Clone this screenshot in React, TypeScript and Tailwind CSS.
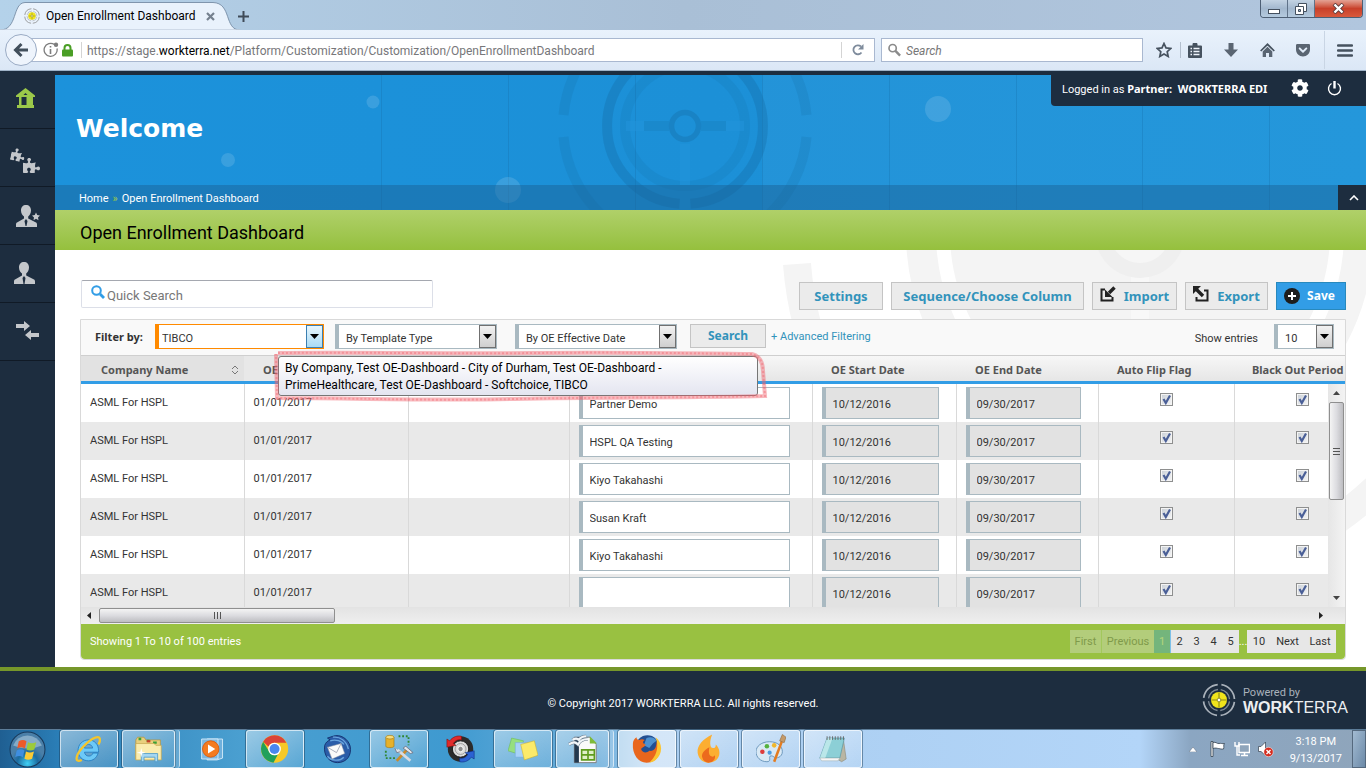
import React from 'react';
import { FaPuzzlePiece, FaCog, FaGetPocket } from 'react-icons/fa';

interface EnrollmentRow {
  id: number;
  company: string;
  effective: string;
  owner: string;
  start: string;
  end: string;
}

const ROWS: EnrollmentRow[] = [
  'Partner Demo',
  'HSPL QA Testing',
  'Kiyo Takahashi',
  'Susan Kraft',
  'Kiyo Takahashi',
  '',
].map((owner, i) => ({
  id: i + 1,
  company: 'ASML For HSPL',
  effective: '01/01/2017',
  owner,
  start: '10/12/2016',
  end: '09/30/2017',
}));

/* ---------- browser chrome ---------- */

function TargetIcon({ className, ring = '#8c8c8c' }: { className: string; ring?: string }) {
  return (
    <svg viewBox="0 0 36 36" className={className} fill="none">
      <circle cx="18" cy="18" r="16.4" stroke={ring} strokeWidth="1.8" strokeDasharray="21.8 4" strokeDashoffset="-2" />
      <circle cx="18" cy="18" r="11.2" stroke={ring} strokeWidth="1.4" strokeDasharray="14.6 3" strokeDashoffset="-1.5" opacity=".7" />
      <circle cx="18" cy="18" r="8.5" fill="#f0e41c" />
      <path d="M18 10v16M10 18h16" stroke="#8d8a1a" strokeWidth="1.2" />
      <circle cx="18" cy="18" r="2" fill="#fff" stroke="#8d8a1a" />
    </svg>
  );
}

function TitleBar() {
  return (
    <div className="flex h-[30px] items-start justify-between bg-linear-to-r from-[#b4d2ea] via-[#a9bfd6] to-[#b1c6de]">
      <div className="flex h-full items-end">
        <div className="relative flex h-[28px] w-[215px] items-center pl-[24px]">
          <svg className="absolute inset-0 h-[28px] w-[240px]" viewBox="0 0 240 28" fill="none">
            <path d="M0 28C18 28 12 1 25 .5H213C232 1 224 28 240 28Z" fill="#e9f2fc" stroke="#7f95ad" />
            <path d="M0 28.500H240" stroke="#e9f2fc" strokeWidth="2" />
          </svg>
          <TargetIcon className="relative size-4" />
          <span className="relative ml-[6px] text-[12px] leading-4 whitespace-nowrap text-black">Open Enrollment Dashboard</span>
          <button aria-label="Close tab" className="relative ml-auto">
            <svg className="size-[9px]" viewBox="0 0 9 9"><path d="M1 1l7 7M8 1L1 8" stroke="#75818f" strokeWidth="2.2" /></svg>
          </button>
        </div>
        <button aria-label="New tab" className="relative mb-[8px] ml-[23px]">
          <svg className="size-[11px]" viewBox="0 0 11 11"><path d="M5.500 0v11M0 5.500h11" stroke="#3f4b58" strokeWidth="2" /></svg>
        </button>
      </div>
      <div className="mr-[3px] flex h-[18px] overflow-hidden rounded-b border border-t-0 border-[#4d5f74]">
        <button aria-label="Minimize" className="flex w-[27px] items-center justify-center border-r border-[#5f7288] bg-linear-to-b from-[#c3d3e3] via-[#a3b8ce] to-[#b4cade]">
          <svg className="mt-1 h-[6px] w-[12px]" viewBox="0 0 12 6"><rect x=".5" y="1.500" width="11" height="4" fill="#fff" stroke="#44505e" /></svg>
        </button>
        <button aria-label="Restore" className="flex w-[27px] items-center justify-center border-r border-[#5f7288] bg-linear-to-b from-[#c3d3e3] via-[#a3b8ce] to-[#b4cade]">
          <svg className="size-[12px]" viewBox="0 0 12 12" fill="#fff" stroke="#44505e"><path d="M3.500.5h8v8h-8z" /><path d="M.5 3.500h8v8h-8z" /><path d="M3.500 6.500h2v2h-2z" fill="#a3b8ce" /></svg>
        </button>
        <button aria-label="Close" className="flex w-[47px] items-center justify-center bg-linear-to-b from-[#e3a294] via-[#c8402a] to-[#d9593c]">
          <svg className="h-[11px] w-[13px]" viewBox="0 0 13 11"><path d="M2 1l9 9M11 1l-9 9" stroke="#5b3b3b" strokeWidth="4" /><path d="M2.500 1.500l8 8M10.500 1.500l-8 8" stroke="#fff" strokeWidth="2.400" /></svg>
        </button>
      </div>
    </div>
  );
}

function NavBar() {
  return (
    <div className="flex h-[41px] items-center border-b border-[#9fb3c8] bg-linear-to-b from-[#e9f2fc] to-[#dbe7f6] pr-[13px] pl-[5px]">
      <button aria-label="Back" className="relative z-10 -mr-[8px] flex size-[32px] items-center justify-center rounded-full border border-[#9aabc4] bg-[#eef4fc]">
        <svg className="size-[16px]" viewBox="0 0 16 16" fill="none" stroke="#424f5c" strokeWidth="3"><path d="M8.500 2L2.500 8l6 6M3 8h12" /></svg>
      </button>
      <div className="flex h-[24px] min-w-0 flex-1 items-center border border-[#a9b8d0] bg-white pl-[13px]">
        <svg className="size-[16px] shrink-0" viewBox="0 0 16 16" fill="none">
          <path d="M11.500 2.600A6.500 6.500 0 1 0 14 6.500" stroke="#7d7d7d" strokeWidth="1.300" />
          <path d="M7.500 7v5M7.500 4v1.600" stroke="#7d7d7d" strokeWidth="1.600" />
          <circle cx="13" cy="2.700" r="2.200" fill="#7d7d7d" />
        </svg>
        <svg className="ml-[3px] h-[13px] w-[11px] shrink-0" viewBox="0 0 11 13"><path d="M2.500 6V4a3 3 0 0 1 6 0v2" fill="none" stroke="#4a9e25" strokeWidth="2" /><rect y="5.500" width="11" height="7" rx="1" fill="#4a9e25" /></svg>
        <div className="ml-[8px] h-4 w-px shrink-0 bg-[#d4d4d4]" />
        <div className="ml-[5px] flex-1 truncate pt-px text-[12px] leading-4 text-[#77777a]">
          https://stage.<span className="text-black">workterra.net</span>/Platform/Customization/Customization/OpenEnrollmentDashboard
        </div>
        <div className="h-4 w-px bg-[#d4d4d4]" />
        <button aria-label="Reload" className="flex w-[32px] justify-center">
          <svg className="size-[12px]" viewBox="0 0 12 12" fill="none"><path d="M9.500 8.500A4.500 4.500 0 1 1 9 2.500" stroke="#7e8b9c" strokeWidth="1.800" /><path d="M11.500 0v5.500H6z" fill="#7e8b9c" /></svg>
        </button>
      </div>
      <label className="ml-[6px] flex h-[24px] w-[262px] items-center border border-[#a9b8d0] bg-white pl-[6px]">
        <svg className="size-[14px]" viewBox="0 0 14 14" fill="none" stroke="#8b8b8b"><circle cx="5" cy="5" r="3.900" strokeWidth="1.800" /><path d="M8 8l5 5" strokeWidth="2.600" /></svg>
        <input aria-label="Search the web" placeholder="Search" className="ml-[5px] w-full pt-px text-[12px] italic outline-none placeholder:text-[#777]" />
      </label>
      <div className="ml-[13px] flex items-center text-[#46525f]">
        <button aria-label="Bookmark this page"><svg className="size-[16px]" viewBox="0 0 16 16" fill="none" stroke="#46525f" strokeWidth="1.700"><path d="M8 1.500l2 4.400 4.700.6-3.500 3.200 1 4.800L8 12.100l-4.200 2.400 1-4.800L1.300 6.500 6 5.900z" /></svg></button>
        <div className="ml-[8px] h-4 w-px bg-[#b3bfce]" />
        <button aria-label="Bookmarks" className="ml-[7px]"><svg className="h-[15px] w-[14px]" viewBox="0 0 14 15"><path d="M4.500 1.500a2.500 2 0 0 1 5 0v1h3.500a1 1 0 0 1 1 1V14a1 1 0 0 1-1 1H1a1 1 0 0 1-1-1V3.500a1 1 0 0 1 1-1h3.500z" fill="#46525f" /><path d="M2.500 5.500H4M2.500 8.500H4M2.500 11.500H4M5.500 5.500h6M5.500 8.500h6M5.500 11.500h6" stroke="#eef4fb" strokeWidth="1.500" /></svg></button>
        <button aria-label="Downloads" className="ml-[22px]"><svg className="size-[14px]" viewBox="0 0 14 14"><path d="M4.500 0h5v6.500H14L7 14 0 6.500h4.500z" fill="#5a6572" /></svg></button>
        <button aria-label="Home" className="ml-[22px]"><svg className="h-[14px] w-[15px]" viewBox="0 0 15 14" fill="none"><path d="M.7 8L7.500 1.300 14.300 8" stroke="#46525f" strokeWidth="1.700" /><path d="M2.700 8.500L7.500 3.800l4.800 4.700V14H9v-4H6v4H2.700z" fill="#5a6572" /></svg></button>
        <button aria-label="Pocket" className="ml-[20px]"><FaGetPocket className="size-4 text-[#5a6572]" /></button>
        <div className="ml-[13px] h-[38px] w-px bg-[#c9d5e4]" />
        <button aria-label="Open menu" className="ml-[12px]"><svg className="h-[13px] w-[16px]" viewBox="0 0 16 13"><path d="M1 1.500h14M1 6.500h14M1 11.500h14" stroke="#46525f" strokeWidth="2.400" strokeLinecap="round" /></svg></button>
      </div>
    </div>
  );
}

/* ---------- site ---------- */

const personPath = 'M11 0c3 0 5 2 5 5.500 0 3-1.500 5-2.800 6v2L21 17.500c.6.400 1 1.200 1 2V22H1v-2.500c0-.8.300-1.600 1-2L9 13.500v-2c-1.500-1-3-3-3-6C6 2 8 0 11 0z';

function Sidebar() {
  const item = 'flex h-[58px] items-center justify-center border-b border-[#101a26]';
  return (
    <nav className="w-[55px] shrink-0 bg-[#1d2d3f] text-[#c4c7cb]">
      <a href="#home" aria-label="Home" className={item}>
        <svg className="mr-1 mb-[3px] h-[20px] w-[19px]" viewBox="0 0 19 20"><path fillRule="evenodd" d="M9.500 0L19 7.500V9h-2v8h1v3H1v-3h2V9H0V7.500zM5.500 9v8h5V9zM7.500 7h4l-2-2z" fill="#9bc84a" /></svg>
      </a>
      <a href="#modules" aria-label="Modules" className={item}>
        <span className="mt-[6px] mr-[4px] flex">
          <FaPuzzlePiece className="-mr-[2px] size-[14px] rotate-12" />
          <FaPuzzlePiece className="mt-[9px] size-[17px]" />
        </span>
      </a>
      <a href="#favorites" aria-label="Favorite users" className={item}>
        <svg className="mr-px h-[22px] w-[25px]" viewBox="0 0 25 22" fill="currentColor"><path d={personPath} /><path d="M11 14l-1.500 2 1 5h1l1-5z" fill="#1d2d3f" /><circle cx="21" cy="11.500" r="5" fill="#1d2d3f" /><path d="M21 7.500l1.200 2.600 2.800.3-2 2 .5 2.800-2.500-1.400-2.500 1.400.5-2.800-2-2 2.800-.3z" /></svg>
      </a>
      <a href="#users" aria-label="Users" className={item}>
        <svg className="mr-[6px] mb-[2px] h-[22px] w-[23px]" viewBox="0 0 23 22" fill="currentColor"><path d={personPath} /><path d="M11 14l-1.500 2 1 6h1l1-6z" fill="#1d2d3f" /></svg>
      </a>
      <a href="#exchange" aria-label="Exchange" className={item}>
        <svg className="mb-[2px] h-[19px] w-[23px]" viewBox="0 0 23 19" fill="currentColor"><path d="M0 3h8V0l6 5-6 5V7H0zM23 12h-8V9l-6 5 6 5v-3h8z" /></svg>
      </a>
    </nav>
  );
}

function Hero() {
  return (
    <header className="relative flex flex-col bg-linear-to-r from-[#1c92db] via-[#1c90d7] to-[#1d94da]">
      <svg className="absolute inset-0 h-full w-full" viewBox="0 0 1311 135" preserveAspectRatio="xMidYMid slice" fill="none">
        <rect x="707" width="604" height="135" fill="#fff" opacity=".03" />
        <path d="M326.500 0v135M453.500 0v135M580.500 0v135M707.500 0v135M834.500 0v135M961.500 0v135M1087.500 0v135M1214.500 0v135" stroke="#1673b0" opacity=".35" />
        <g stroke="#156fa8" opacity=".42">
          <path d="M508.500 40A122 122 0 0 1 751.500 40M508.500 62A122 122 0 0 0 751.500 62" strokeWidth="10" opacity=".5" />
          <path d="M624.500-26.800A78 78 0 0 0 624.500 128.800M635.500-26.800A78 78 0 0 1 635.500 128.800" strokeWidth="10" opacity=".85" />
          <circle cx="630" cy="51" r="60" strokeWidth="10" opacity=".4" />
          <circle cx="630" cy="51" r="13.500" strokeWidth="5.500" opacity=".9" />
          <path d="M589 51h25M646 51h25" strokeWidth="10" opacity=".5" />
        </g>
        <path d="M571 51h18M671 51h18M630 69v41" stroke="#2294da" strokeWidth="10" opacity=".55" />
        <g fill="#fff" opacity=".13"><circle cx="883" cy="34" r="13" /><circle cx="453" cy="115" r="13" /><circle cx="318" cy="27" r="6.500" /><circle cx="173" cy="85" r="7" /></g>
      </svg>
      <div className="relative flex h-[110px] items-start justify-between">
        <h1 className="mt-[36px] ml-[21px] font-['DejaVu_Sans',sans-serif] text-[25px] leading-9 font-bold text-white">Welcome</h1>
        <div className="flex h-[31px] w-[315px] items-center rounded-bl-sm bg-[#1d2d3f] pb-[2px] pl-[11px] text-[11px] whitespace-pre text-white">
          <span>Logged in as <b className="font-['Noto_Sans',sans-serif]">Partner:  WORKTERRA EDI</b></span>
          <button aria-label="Settings" className="mr-[18px] mb-[4px] ml-auto"><FaCog className="size-[18px]" /></button>
          <button aria-label="Log out" className="mr-[24px] mb-[2px]"><svg className="size-[15px]" viewBox="0 0 15 15" fill="none" stroke="#fff"><path d="M4.500 2.500a6 6 0 1 0 6 0" strokeWidth="1.400" /><path d="M7.500 0v7.500" strokeWidth="2.400" /></svg></button>
        </div>
      </div>
      <div className="relative flex h-[25px] items-center justify-between bg-[#1a5f92]/45">
        <nav className="ml-[24px] flex gap-1 pt-[3px] text-[11px] text-white">
          <a href="#home">Home</a>
          <span className="text-[#9bc84a]">»</span>
          <span>Open Enrollment Dashboard</span>
        </nav>
        <button aria-label="Collapse header" className="flex h-[25px] w-[28px] items-center justify-center bg-[#1d2d3f] pl-[4px]">
          <svg className="h-[6px] w-[10px]" viewBox="0 0 10 6" fill="none" stroke="#fff" strokeWidth="1.600"><path d="M1 5l4-4 4 4" /></svg>
        </button>
      </div>
    </header>
  );
}

function FilterSelect({ label, value, width, active }: { label: string; value: string; width: string; active?: boolean }) {
  return (
    <div className={`relative h-[25px] border border-l-4 bg-white ${width} ${active ? 'border-[#ff8a00]' : 'border-[#a9b9c1]'}`}>
      <select aria-label={label} className={`h-full w-full appearance-none text-[11px] text-[#333] outline-none ${active ? 'pl-[3px]' : 'pt-px pl-[7px]'}`}>
        <option>{value}</option>
      </select>
      <span className={`pointer-events-none absolute inset-y-0 right-0 flex w-[17px] items-center justify-center border ${active ? 'border-[#3c7fb1] bg-linear-to-b from-[#e8f6fd] to-[#a9dbf5]' : 'border-[#707070] bg-linear-to-b from-[#f2f2f2] to-[#cfcfcf]'}`}>
        <svg className="h-[5px] w-[9px]" viewBox="0 0 9 5"><path d="M0 0h9L4.500 5z" /></svg>
      </span>
    </div>
  );
}

function Toolbar() {
  const btn = "flex h-[28px] items-center justify-center border border-[#c4c4c4] bg-[#ebebeb] pt-[2px] font-['Noto_Sans',sans-serif] text-[13px] font-bold text-[#3293bb]";
  return (
    <div className="relative flex items-start justify-between pl-px">
      <label className="flex h-[28px] w-[352px] items-center rounded-xs border border-[#dcdfe8] border-t-[#a5a8b0] bg-white pl-[9px]">
        <svg className="mb-[4px] size-[14px] shrink-0" viewBox="0 0 14 14" fill="none" stroke="#329de6"><circle cx="5.500" cy="5.500" r="4.300" strokeWidth="2" /><path d="M9 9l4 4" strokeWidth="2.800" /></svg>
        <input aria-label="Quick Search" placeholder="Quick Search" className="ml-[2px] w-full pt-[4px] text-[13px] outline-none placeholder:text-[#777]" />
      </label>
      <div className="mt-[2px] flex gap-2">
        <button className={`${btn} w-[84px]`}>Settings</button>
        <button className={`${btn} w-[193px]`}>Sequence/Choose Column</button>
        <button className={`${btn} w-[85px] gap-[8px]`}>
          <svg className="mb-[6px] size-[16px]" viewBox="0 0 16 16" fill="none" stroke="#222"><path d="M5 3.500H1.500v11h11V11" strokeWidth="2" /><path d="M14.500 1.500L9 7" strokeWidth="3.400" /><path d="M5 3.500V11h7.500z" fill="#222" stroke="none" /></svg>
          Import
        </button>
        <button className={`${btn} w-[83px] gap-[8px]`}>
          <svg className="mb-[6px] size-[16px]" viewBox="0 0 16 16" fill="none" stroke="#222"><path d="M11 4.500h3.500v10h-11V11" strokeWidth="2" /><path d="M3 3l7 7" strokeWidth="3.400" /><path d="M0 0h8L0 8z" fill="#222" stroke="none" /></svg>
          Export
        </button>
        <button className="flex h-[28px] w-[70px] items-center justify-center gap-[7px] border border-[#2889bd] bg-[#329de6] pr-[3px] font-['Noto_Sans',sans-serif] text-[12px] font-bold text-white">
          <svg className="size-[16px]" viewBox="0 0 16 16"><circle cx="8" cy="8" r="8" fill="#1d1d1d" /><path d="M8 4v8M4 8h8" stroke="#fff" strokeWidth="2" /></svg>
          Save
        </button>
      </div>
    </div>
  );
}

function FilterTooltip() {
  const outline = 'M4 4C90 3 180 5 260 4S400 4 478 5Q489 8 489 22L491 47C420 49 330 48 240 50S90 49 3 49L2 5';
  return (
    <div role="tooltip" className="absolute top-[36px] left-[197px] z-10 w-[480px] rounded-[3px] border border-[#767676] bg-linear-to-b from-white to-[#e4e5f0] px-[6px] pt-[3px] pb-px text-[12px] leading-[17px] text-black">
      By Company, Test OE-Dashboard - City of Durham, Test OE-Dashboard -<br />
      PrimeHealthcare, Test OE-Dashboard - Softchoice, TIBCO
      <svg className="absolute -top-[8px] -left-[5px] h-[55px] w-[494px]" viewBox="0 0 494 55" fill="none" stroke="#f0616c">
        <path d={outline} strokeWidth="4" opacity=".45" />
        <path d={outline} strokeWidth="2" strokeDasharray="2 2" opacity=".4" />
      </svg>
    </div>
  );
}

function Columns() {
  return (
    <colgroup>
      <col className="w-[163px]" />
      <col className="w-[164px]" />
      <col className="w-[161px]" />
      <col className="w-[243px]" />
      <col className="w-[144px]" />
      <col className="w-[142px]" />
      <col className="w-[136px]" />
      <col className="w-[137px]" />
    </colgroup>
  );
}

function FlagBox({ label }: { label: string }) {
  return (
    <span className="mb-[8px] inline-grid align-middle">
      <input type="checkbox" defaultChecked aria-label={label} className="col-start-1 row-start-1 size-[13px] appearance-none border border-[#8e8f8f] bg-linear-to-br from-[#c9cfd6] to-[#f6f6f6] ring-1 ring-[#f4f4f4] ring-inset" />
      <svg className="pointer-events-none col-start-1 row-start-1 size-[13px]" viewBox="0 0 13 13" fill="none" stroke="#4a5f97" strokeWidth="2.200"><path d="M3.500 6l2.300 4L10 2.500" /></svg>
    </span>
  );
}

function EnrollmentTable() {
  const field = 'h-[32px] border border-l-4 border-[#a9b9c1] pl-[7px] pt-[3px] text-[11px] outline-none';
  const cell = 'border-r border-[#d9d9d9]';
  return (
    <>
      <div className="overflow-hidden border-b-3 border-[#329de6] bg-linear-to-b from-[#f7f7f7] to-[#e6e6e6]">
        <table className="w-full min-w-[1290px] table-fixed text-left font-['Noto_Sans',sans-serif] text-[11px] text-[#555]">
          <Columns />
          <thead>
            <tr className="h-[25px] *:pt-[3px]">
              <th className="bg-[#e2e2e2] pl-[20px]">
                <div className="flex items-center justify-between pr-[5px]">
                  Company Name
                  <svg className="h-[10px] w-[8px]" viewBox="0 0 8 10" fill="none" stroke="#777"><path d="M1 4l3-3 3 3M1 6l3 3 3-3" /></svg>
                </div>
              </th>
              <th className="bg-[#e8e8e8] pl-[19px]">OE</th>
              <th />
              <th />
              <th className="pl-[19px]">OE Start Date</th>
              <th className="pl-[19px]">OE End Date</th>
              <th className="pl-[19px]">Auto Flip Flag</th>
              <th className="pl-[18px]">Black Out Period</th>
            </tr>
          </thead>
        </table>
      </div>
      <div className="flex h-[223px] bg-white">
        <div className="min-w-0 flex-1 overflow-hidden">
          <table className="w-full min-w-[1290px] table-fixed text-[11px] text-[#333]">
            <Columns />
            <tbody>
              {ROWS.map((row) => (
                <tr key={row.id} className="h-[38px] bg-white even:bg-[#e9e9e9]">
                  <td className={`${cell} pl-[9px]`}>{row.company}</td>
                  <td className={`${cell} pl-[9px]`}>{row.effective}</td>
                  <td className={cell} />
                  <td className={`${cell} pl-[9px]`}>
                    <input aria-label="Account owner" defaultValue={row.owner} className={`${field} block w-[211px] bg-white`} />
                  </td>
                  <td className={`${cell} pl-[9px]`}>
                    <input aria-label="OE Start Date" readOnly defaultValue={row.start} className={`${field} block w-[117px] bg-[#e2e2e2]`} />
                  </td>
                  <td className={`${cell} pl-[9px]`}>
                    <input aria-label="OE End Date" readOnly defaultValue={row.end} className={`${field} block w-[115px] bg-[#e2e2e2]`} />
                  </td>
                  <td className={`${cell} text-center`}><FlagBox label="Auto Flip Flag" /></td>
                  <td className="text-center"><FlagBox label="Black Out Period" /></td>
                </tr>
              ))}
            </tbody>
          </table>
        </div>
        <div className="flex w-[17px] flex-col items-center bg-linear-to-r from-[#e6e6e6] to-[#f3f3f3] py-[7px]">
          <svg className="h-[4px] w-[7px]" viewBox="0 0 7 4"><path d="M0 4h7L3.500 0z" fill="#444" /></svg>
          <div className="mt-[7px] flex h-[98px] w-[15px] flex-col items-center justify-center gap-[2px] rounded-xs border border-[#8f8f8f] bg-linear-to-r from-[#f4f4f4] via-[#dcdce0] to-[#bdbdc1]">
            <span className="h-px w-[7px] bg-[#555]" />
            <span className="h-px w-[7px] bg-[#555]" />
            <span className="h-px w-[7px] bg-[#555]" />
          </div>
          <svg className="mt-auto h-[4px] w-[7px]" viewBox="0 0 7 4"><path d="M0 0h7L3.500 4z" fill="#444" /></svg>
        </div>
      </div>
      <div className="flex h-[17px] items-center bg-linear-to-b from-[#e3e3e3] to-[#efefef] pr-[22px] pl-[6px]">
        <svg className="h-[7px] w-[4px]" viewBox="0 0 4 7"><path d="M4 0v7L0 3.500z" fill="#222" /></svg>
        <div className="ml-[8px] flex h-[15px] w-[236px] items-center justify-center gap-[2px] rounded-xs border border-[#8f8f8f] bg-linear-to-b from-[#f4f4f4] via-[#dcdce0] to-[#bdbdc1]">
          <span className="h-[7px] w-px bg-[#555]" />
          <span className="h-[7px] w-px bg-[#555]" />
          <span className="h-[7px] w-px bg-[#555]" />
        </div>
        <svg className="ml-auto h-[7px] w-[4px]" viewBox="0 0 4 7"><path d="M0 0v7l4-3.500z" fill="#222" /></svg>
      </div>
    </>
  );
}

function Pagination() {
  return (
    <div className="flex h-[35px] items-center justify-between rounded-b bg-[#99c141] pr-[9px] pl-[9px] text-[11px]">
      <span className="pt-[2px] text-white">Showing 1 To 10 of 100 entries</span>
      <div className="flex h-[23px] items-center text-[#333] *:pt-[2px]">
        <button disabled className="h-full w-[32px] border-r border-[#a2c85c] bg-[#b3cd7b] text-[#7f9a4a]">First</button>
        <button disabled className="h-full w-[52px] bg-[#b3cd7b] text-[#7f9a4a]">Previous</button>
        <button className="h-full w-[17px] border-r border-[#7cc0e8] bg-[#74b57c] text-[#b4d67b]">1</button>
        {[2, 3, 4, 5].map((n) => (
          <button key={n} className="h-full w-[17px] bg-[#e7e7e7]">{n}</button>
        ))}
        <span className="flex w-[8px] justify-center text-white">...</span>
        <button className="h-full w-[24px] bg-[#e7e7e7]">10</button>
        <button className="h-full w-[33px] bg-[#e7e7e7]">Next</button>
        <button className="h-full w-[32px] bg-[#e7e7e7]">Last</button>
      </div>
    </div>
  );
}

function Dashboard() {
  return (
    <section className="relative overflow-hidden bg-white pt-[30px] pr-[20px] pb-[6px] pl-[25px]">
      <svg className="absolute top-0 right-0 h-[417px] w-[600px]" viewBox="0 0 600 417" fill="none" stroke="#f4f4f4">
        <path d="M31 14A344 344 0 0 0 717 14" strokeWidth="28" />
        <circle cx="374" cy="-17" r="219" strokeWidth="30" />
        <circle cx="374" cy="-17" r="190" fill="#f4f4f4" stroke="none" />
        <path d="M365 -17h18v200h-18z" fill="#f8f8f8" stroke="none" />
        <circle cx="374" cy="-17" r="45" fill="#efefef" stroke="none" />
        <circle cx="374" cy="-17" r="30" fill="#f6f6f6" stroke="none" />
      </svg>
      <Toolbar />
      <div className="relative mt-[9px] rounded-b border border-[#d9d9d9]">
        <div className="flex h-[36px] items-start border-b border-[#cfcfcf] bg-[#f9f9f9] pt-[4px]">
          <span className="w-[74px] pt-[5px] pl-[14px] font-['Noto_Sans',sans-serif] text-[11px] font-bold text-[#333]">Filter by:</span>
          <FilterSelect label="Company" value="TIBCO" width="w-[169px]" active />
          <div className="w-[11px]" />
          <FilterSelect label="Template type" value="By Template Type" width="w-[162px]" />
          <div className="w-[18px]" />
          <FilterSelect label="OE effective date" value="By OE Effective Date" width="w-[162px]" />
          <button className="ml-[13px] h-[24px] w-[76px] border border-[#c4c4c4] bg-[#ebebeb] font-['Noto_Sans',sans-serif] text-[12px] font-bold text-[#3293bb]">Search</button>
          <a href="#advanced" className="ml-[5px] pt-[5px] text-[11px] text-[#3293bb]">+ Advanced Filtering</a>
          <span className="mr-[16px] ml-auto pt-[7px] text-[11px] text-[#333]">Show entries</span>
          <FilterSelect label="Show entries" value="10" width="w-[60px]" />
          <div className="w-[11px]" />
        </div>
        <FilterTooltip />
        <EnrollmentTable />
        <Pagination />
      </div>
    </section>
  );
}

function SiteFooter() {
  return (
    <footer className="relative flex h-[62px] items-center justify-center border-t-4 border-[#76972a] bg-[#1d2d3f] pt-[8px] text-[11px] text-white">
      © Copyright 2017 WORKTERRA LLC. All rights reserved.
      <div className="absolute inset-y-0 right-[15px] flex items-center gap-[7px]">
        <TargetIcon className="size-[34px]" ring="#aab2bb" />
        <div className="w-[108px] leading-[15px] text-[#c7cdd3]">
          <div className="text-[11px] text-[#aab2bb]">Powered by</div>
          <div className="font-['Liberation_Sans',sans-serif] text-[16px] text-[#eceff1]"><b>WORK</b>TERRA</div>
        </div>
      </div>
    </footer>
  );
}

/* ---------- taskbar ---------- */

const ie = (
  <>
    <path d="M26.500 20.500C25 26 20.500 29 16 29 9 29 4.500 24 4.500 17.500S9.500 6 16 6s11 5 11 11.500v2H11.500c.5 3 2.500 4.300 5 4.300 2 0 3.500-1 4.300-3.300zM11.500 15h9c-.3-2.500-2-4-4.500-4s-4.200 1.500-4.500 4z" fill="#6cc9f7" stroke="#1a75bd" strokeWidth=".8" />
    <path d="M27 11c2.500-5 1.800-8-1-8C20 3 5 16 3 25c-.8 4 1.500 5 5.500 3" fill="none" stroke="#f4c52c" strokeWidth="2.500" />
  </>
);
const explorer = (
  <>
    <path d="M2 6l2-3h7l2 3h16v21H2z" fill="#e9cf7d" stroke="#b5943d" strokeWidth=".8" />
    <path d="M5 5h3M14 7h3M21 9h4" stroke="#3aa035" strokeWidth="2.500" />
    <path d="M14 7.500h4" stroke="#c8402a" strokeWidth="2.500" />
    <path d="M2 10h20l2 2h6v16H2z" fill="#fbecae" stroke="#c7a850" strokeWidth=".8" />
    <path d="M8 30V21h18v9h-3v-5H11v5z" fill="#a6d7f3" stroke="#4d99c8" strokeWidth=".9" />
    <path d="M8 15l1 4 4 1-4 1-1 4-1-4-4-1 4-1z" fill="#fff" />
  </>
);
const mediaPlayer = (
  <>
    <path d="M10 5h17v21l-6 2H10z" fill="#6fb0dc" stroke="#d5ebfa" />
    <path d="M4 5h18v22H4z" fill="#7cb9e3" stroke="#d5ebfa" />
    <circle cx="14" cy="16" r="9" fill="#f47b20" stroke="#d95b0c" />
    <path d="M11 11v10l8-5z" fill="#fff" />
  </>
);
const chrome = (
  <>
    <circle cx="16" cy="16" r="15" fill="#f6c927" />
    <path d="M16 1a15 15 0 0 1 13 8H16a7 7 0 0 0-6.500 4.500L3.500 8A15 15 0 0 1 16 1z" fill="#db4437" />
    <path d="M3.500 8A15 15 0 0 0 14.800 31l5-9.300A7 7 0 0 1 9.500 18z" fill="#20a05b" />
    <circle cx="16" cy="16" r="7" fill="#fff" />
    <circle cx="16" cy="16" r="5.500" fill="#4a87ee" />
  </>
);
const thunderbird = (
  <>
    <path d="M3 12C1 24 9 31 17 31c10 0 16-8 14-18C29 5 20-1 12 2L6 4l3 2c-3 1-5 3-6 6z" fill="#2a5ca8" stroke="#14316c" />
    <path d="M12 3c8-1 15 4 17 13M9 7c6-2 13 0 15 4M6 24c4 5 13 6 18 1" stroke="#69a4dd" strokeWidth="1.500" fill="none" />
    <path d="M6 14l15-4 4 11-14 6z" fill="#fafafa" stroke="#8a93a5" strokeWidth=".6" />
    <path d="M6 14l10 6 5-10" stroke="#9a9fae" strokeWidth=".9" fill="none" />
  </>
);
const sqlTools = (
  <>
    <path d="M2 3v10c0 2 9 2 9 0V3" fill="#e6b12b" stroke="#a2770d" strokeWidth=".7" />
    <ellipse cx="6.500" cy="3" rx="4.500" ry="2" fill="#f8dd7e" stroke="#a2770d" strokeWidth=".7" />
    <path d="M16 2h11v10M2 18v8h11" fill="none" stroke="#2f8630" strokeWidth="2" strokeDasharray="2 2" />
    <path d="M26 16L14 29" stroke="#c98a2c" strokeWidth="3" />
    <path d="M15 17l14 12" stroke="#d8dce2" strokeWidth="3" />
    <path d="M12 15l2 5 4-1M21 15l3-2 8 7-3 1z" fill="#e3e6ea" stroke="#667" strokeWidth=".8" />
  </>
);
const syncWheel = (
  <>
    <circle cx="16" cy="16" r="14" fill="#2b2b2b" />
    <circle cx="16" cy="16" r="9" fill="#dcdcdc" stroke="#111" />
    <circle cx="16" cy="16" r="6" fill="none" stroke="#999" />
    <circle cx="16" cy="16" r="3" fill="#8d8d8d" stroke="#fff" />
    <path d="M1 14V5l3 2C8 2 13 1 17 2v4c-4-1-7 1-9 4l3 2z" fill="#e02b2b" stroke="#7e0d0d" strokeWidth=".6" />
    <path d="M31 18v9l-3-2c-4 5-9 6-13 5v-4c4 1 7-1 9-4l-3-2z" fill="#2b62d3" stroke="#0d2a7e" strokeWidth=".6" />
  </>
);
const stickyNotes = (
  <>
    <path d="M4 4l13 3-4 15-13-4z" fill="#96df7f" stroke="#6ab855" strokeWidth=".6" />
    <path d="M8 9h14v16H8z" fill="#a7d2f8" stroke="#72a9dd" strokeWidth=".6" />
    <path d="M14 11l15-4 4 16-15 5z" fill="#fcea69" stroke="#c8af2a" strokeWidth=".6" />
  </>
);
const officeCalc = (
  <>
    <path d="M7 3h17l7 8v20H7z" fill="#fafafa" stroke="#777" />
    <path d="M7 3h5v28H7z" fill="#22384e" />
    <path d="M24 2v8h8z" fill="#7fbb3a" />
    <path d="M15 17h14v11H15zM15 22.500h14M22 17v11" fill="#dff0c8" stroke="#5f9c1e" strokeWidth="1.800" />
    <path d="M1 11c5-3 7-3 10 0 2-4 6-6 11-6M5 6c3-2 5-2 7 0 2-3 4-4 8-4" fill="none" stroke="#6d7f90" strokeWidth="3.500" />
    <path d="M1 11c5-3 7-3 10 0 2-4 6-6 11-6M5 6c3-2 5-2 7 0 2-3 4-4 8-4" fill="none" stroke="#f2f6f9" strokeWidth="2.300" />
  </>
);
const firefox = (
  <>
    <circle cx="17" cy="14" r="13" fill="#224f92" />
    <path d="M16 4c4-2 9-1 11 3l-4 3-4 5-6-3z" fill="#4d91d0" />
    <path d="M1 10C1 7 3 4 5 3c0 2 1 3 3 3 2-1 4-1 6 0-3 2-2 4 1 5-1 3-4 3-5 5 1 4 6 5 9 2 5 1 8-3 8-10 3 4 4 8 3 12-2 7-7 11-14 11C7 31 0 22 1 10z" fill="#e9661c" />
    <path d="M26 3c8 6 8 19 0 25-2 2-4 2-7 3 8-7 11-17 7-28z" fill="#fbc532" />
  </>
);
const flame = (
  <>
    <path d="M20 0C10 5 3 12 4 20c1 7 6 11 12 11s12-4 12-11c0-4-2-7-4-9 0 3-1 4-3 4-4 0-4-8-1-15z" fill="#fcae31" />
    <path d="M17 14c-6 3-9 7-8 11s4 6 7 6c5 0 8-4 7-8-1 1-2 2-4 1-3-1-3-6-2-10z" fill="#ec6a1d" />
  </>
);
const paint = (
  <>
    <path d="M15 8C6 8 0 13 0 19s5 11 12 11c4 0 3-3 3-5s3-2 5 0 9 0 9-6-5-11-14-11z" fill="#d9e9f5" stroke="#6492b8" />
    <circle cx="7" cy="19" r="2.500" fill="#de3b3b" /><circle cx="12" cy="13" r="2.500" fill="#56b13f" /><circle cx="20" cy="12" r="2.500" fill="#f0b72d" /><circle cx="15" cy="20" r="2.300" fill="#4b9be0" />
    <path d="M29 6L20 30" stroke="#e37c21" strokeWidth="2.800" />
    <path d="M26 7l3-7 4 3-2 6z" fill="#c49a6a" stroke="#8a6437" strokeWidth=".6" />
  </>
);
const notepad = (
  <>
    <path d="M28 6l3 21-5 3-5-3z" fill="#b9b6a3" stroke="#86836f" strokeWidth=".6" />
    <path d="M10 4h19l-5 22H2z" fill="#8ccfd6" stroke="#5a9ba8" strokeWidth=".8" />
    <path d="M10 4h6L8 26H2z" fill="#c6ecee" opacity=".8" />
    <path d="M10 2v4M13 2v4M16 2v4M19 2v4M22 2v4M25 2v4M28 2v4" stroke="#666" />
    <path d="M2 26l2 3h18l2-3z" fill="#f6f6f6" stroke="#9aa" strokeWidth=".5" />
  </>
);

const TASKS = [
  { name: 'Internet Explorer', art: ie, open: true },
  { name: 'Windows Explorer', art: explorer, open: true, stacked: true },
  { name: 'Media Player', art: mediaPlayer },
  { name: 'Chrome', art: chrome, open: true },
  { name: 'Thunderbird', art: thunderbird },
  { name: 'SQL Tools', art: sqlTools, open: true },
  { name: 'Sync', art: syncWheel },
  { name: 'Sticky Notes', art: stickyNotes, open: true },
  { name: 'Calc', art: officeCalc, open: true, stacked: true },
  { name: 'Firefox', art: firefox, open: true, active: true },
  { name: 'Flame', art: flame, open: true },
  { name: 'Paint', art: paint, open: true },
  { name: 'Notepad', art: notepad, open: true },
];

function Taskbar() {
  return (
    <div className="flex h-[39px] items-center border-t border-[#5c7c98] bg-[linear-gradient(90deg,#1f5f92_0,#2b7fb8_60px,#4a9fd0_240px,#3f9ad0_450px,#6fb0dc_600px,#a9cdf0_650px,#b3d5f8_1140px,#8ba6c2_1190px,#8fa5bb_100%)]">
      <button aria-label="Start" className="flex w-[60px] shrink-0 justify-center pr-[6px]">
        <svg className="size-[37px]" viewBox="0 0 36 36">
          <defs><radialGradient id="orb" cy=".9"><stop offset="0" stopColor="#3fd0f5" /><stop offset=".6" stopColor="#1c6ba0" /><stop offset="1" stopColor="#4a7fa8" /></radialGradient></defs>
          <circle cx="18" cy="18" r="17" fill="url(#orb)" stroke="#18395a" />
          <path d="M4 14a15 15 0 0 1 28 0q-14 6-28 0z" fill="#cfe2ee" opacity=".45" />
          <path d="M9.500 10c3-1.500 5-1.500 7.500 0l-1.500 7c-2.500-1.500-5-1.500-7.500 0z" fill="#ee5a2a" />
          <path d="M18.500 11c2.500 1.300 5 1.300 8 0l-1.800 7c-3 1.300-5 1.200-7.700 0z" fill="#9ccb3b" />
          <path d="M7.500 19c3-1.500 5-1.500 7.500 0l-1.500 6.500c-2.500-1.500-5-1.500-7.500 0z" fill="#3f8ee0" />
          <path d="M16.500 20c2.700 1.300 5 1.300 7.800 0l-1.800 7c-3 1.300-5 1.200-7.500 0z" fill="#fbcb35" />
        </svg>
      </button>
      <div className="flex gap-1">
        {TASKS.map((t) => (
          <button key={t.name} aria-label={t.name} className="flex h-[38px] w-[58px]">
            <span className={`flex h-full flex-1 items-center justify-center rounded-[3px] ${t.open ? 'border border-white/70 ring-1 ring-[#1e3f5c]/50 ' : ''}${t.active ? 'bg-white/50' : t.open ? 'bg-linear-to-br from-white/45 to-white/10' : ''}`}>
              <svg className="size-[30px]" viewBox="0 0 33 32">{t.art}</svg>
            </span>
            {t.stacked && <span className="h-full w-[5px] rounded-r-[3px] border-r border-white/60 bg-white/20" />}
          </button>
        ))}
      </div>
      <div className="ml-auto flex h-full items-center text-white">
        <svg className="h-[5px] w-[8px]" viewBox="0 0 8 5"><path d="M0 5h8L4 0z" fill="#fff" stroke="#5b6b7d" strokeWidth=".5" /></svg>
        <svg className="ml-[13px] h-[16px] w-[15px]" viewBox="0 0 15 16" fill="#fff" stroke="#33414f" strokeWidth=".8"><path d="M1 .5h2V15.500H1z" /><path d="M3 1.500c3-1 4 1.500 6 1s3 .5 5.500 0c-1.500 2 0 3-1 5.500-2 .5-4-.5-5-.5s-3-1-5.500 0z" /></svg>
        <svg className="ml-[9px] size-[16px]" viewBox="0 0 16 16" fill="none"><path d="M5 3.500h10.500v8H5z" fill="#8fa5bb" stroke="#fff" strokeWidth="1.400" /><path d="M7 14.500h7M10.500 12v2" stroke="#fff" strokeWidth="1.500" /><path d="M1 1v4h4V1M3 5v9h3" stroke="#fff" strokeWidth="1.400" /></svg>
        <svg className="ml-[8px] size-[16px]" viewBox="0 0 16 16"><path d="M.5 5.500H3L7.500 1v13.500L3 10.500H.5z" fill="#fff" stroke="#33414f" strokeWidth=".7" /><circle cx="10.500" cy="11" r="4.700" fill="#d52b1e" stroke="#fff" strokeWidth=".5" /><path d="M8.500 9l4 4M12.500 9l-4 4" stroke="#fff" strokeWidth="1.400" /></svg>
        <div className="mr-[10px] ml-[16px] pt-[2px] text-center text-[11px] leading-[17px]">
          <div>3:18 PM</div>
          <div>9/13/2017</div>
        </div>
        <button aria-label="Show desktop" className="h-full w-[14px] border border-[#55697e] bg-linear-to-br from-[#a3bbd2] to-[#6c8aa8]" />
      </div>
    </div>
  );
}

export default function App() {
  return (
    <div className="flex min-h-screen flex-col font-[Roboto,sans-serif]">
      <TitleBar />
      <NavBar />
      <div className="flex flex-1 bg-[#1d2d3f]">
        <Sidebar />
        <main className="min-w-0 flex-1 bg-white">
          <div className="h-[4px] bg-[#1d2d3f]" />
          <Hero />
          <h2 className="flex h-[40px] items-center bg-linear-to-b from-[#b0d069] to-[#95c03d] pt-[5px] pl-[25px] text-[18px] text-black">Open Enrollment Dashboard</h2>
          <Dashboard />
        </main>
      </div>
      <SiteFooter />
      <Taskbar />
    </div>
  );
}
